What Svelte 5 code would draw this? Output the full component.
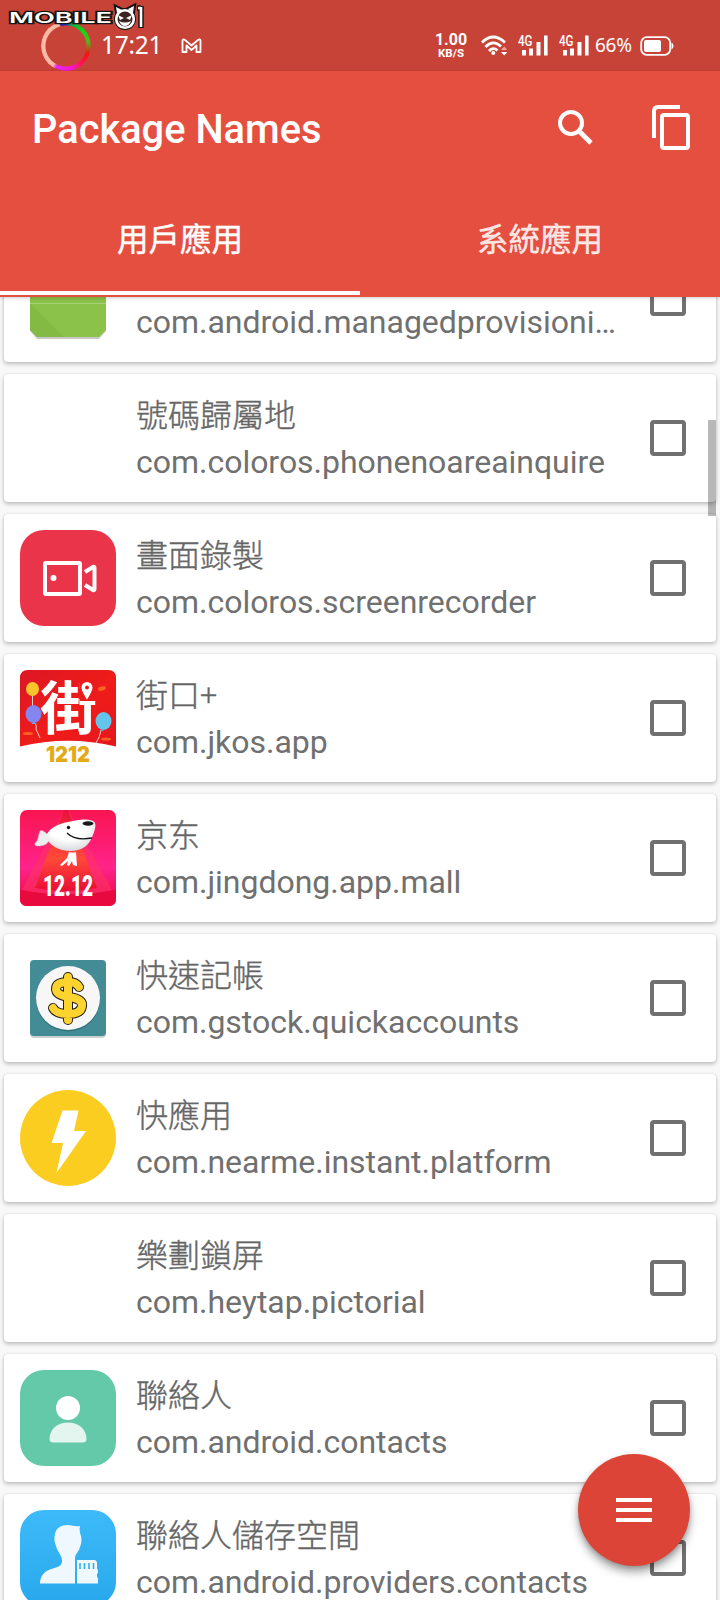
<script>
  let apps = $state([
    { name: '', pkg: 'com.android.managedprovisioning', icon: 'android', checked: false },
    { name: '號碼歸屬地', pkg: 'com.coloros.phonenoareainquire', icon: '', checked: false },
    { name: '畫面錄製', pkg: 'com.coloros.screenrecorder', icon: 'recorder', checked: false },
    { name: '街口+', pkg: 'com.jkos.app', icon: 'jkos', checked: false },
    { name: '京东', pkg: 'com.jingdong.app.mall', icon: 'jd', checked: false },
    { name: '快速記帳', pkg: 'com.gstock.quickaccounts', icon: 'money', checked: false },
    { name: '快應用', pkg: 'com.nearme.instant.platform', icon: 'bolt', checked: false },
    { name: '樂劃鎖屏', pkg: 'com.heytap.pictorial', icon: '', checked: false },
    { name: '聯絡人', pkg: 'com.android.contacts', icon: 'contacts', checked: false },
    { name: '聯絡人儲存空間', pkg: 'com.android.providers.contacts', icon: 'storage', checked: false }
  ]);

  const tabs = ['用戶應用', '系統應用'];
  let activeTab = $state(0);
</script>

{#snippet signal()}
  <svg class="signal" width="30" height="21" viewBox="0 0 30 21">
    <text x="0" y="11" textLength="14.500" lengthAdjust="spacingAndGlyphs">4G</text>
    <path d="M4 15h4v5.500h-4zM11 13.500h4v7h-4zM18.500 7h4v13.500h-4zM26 0.500h3.600v20h-3.600z" />
  </svg>
{/snippet}

{#snippet appIcon(icon)}
  <svg class="app-icon" width="96" height="96" viewBox="0 0 96 96">
    {#if icon === 'android'}
      <path d="M10 10h76v70l-7 8H17l-7-8z" fill="#c9c9c9" transform="translate(0 1)" />
      <path d="M10 10h76v70l-7 7H17l-7-7z" fill="#8bc34a" />
      <path d="M10 53l34 34H17l-7-7z" fill="#7fb642" opacity="0.7" />
      <path d="M10 53.500h76" stroke="#a5cf74" />
    {:else if icon === 'recorder'}
      <rect width="96" height="96" rx="24" fill="#ea3449" />
      <g fill="none" stroke="#fff" stroke-width="4" stroke-linejoin="round">
        <rect x="25" y="33" width="35" height="31" rx="1" />
        <path d="M65 42l8-5q1.500-.5 1.500 1v21q0 1.500-1.500 1l-8-5" />
      </g>
      <circle cx="33.500" cy="48" r="3" fill="#fff" />
    {:else if icon === 'jkos'}
      <defs>
        <linearGradient id="jkosBg" x2="1" y2="1">
          <stop offset="0" stop-color="#dd1724" />
          <stop offset="0.55" stop-color="#ef1c19" />
          <stop offset="1" stop-color="#e5161d" />
        </linearGradient>
      </defs>
      <path d="M8 0h80q8 0 8 8v68.500Q48 65 0 76.500V8q0-8 8-8z" fill="url(#jkosBg)" />
      <g fill="#ff7429" opacity="0.8">
        <ellipse cx="82" cy="18.500" rx="4" ry="2" transform="rotate(-15 82 18.500)" />
        <ellipse cx="8" cy="63.500" rx="5" ry="1.500" />
        <ellipse cx="86" cy="69" rx="5" ry="1.500" />
      </g>
      <text class="jkos-char" x="20" y="58.500">街</text>
      <path d="M60 9h17v22H60z" fill="#ec1b1b" />
      <path d="M67 12a5.500 5.500 0 0 1 5.500 5.500c0 4-5.500 12-5.500 12s-5.500-8-5.500-12A5.500 5.500 0 0 1 67 12z" fill="#fff" />
      <circle cx="67" cy="17.500" r="2" fill="#e91d1d" />
      <g fill="none" stroke="#ffd3c8" stroke-width="1">
        <path d="M12.500 25v11M15 53q2 3 1 6l4 9M81 60q-1 7-5 13" />
      </g>
      <ellipse cx="12.500" cy="19" rx="6.500" ry="7" fill="#f9c52b" />
      <ellipse cx="13.500" cy="44" rx="8" ry="9" fill="#8585ee" />
      <ellipse cx="83.500" cy="51" rx="8" ry="9" fill="#65c4e9" />
      <path d="M11 54l3-2 3 2zM80 61l2-2 2 2z" fill="#65a9e0" />
      <text class="jkos-date" x="26" y="91.500" textLength="44" lengthAdjust="spacingAndGlyphs">1212</text>
    {:else if icon === 'jd'}
      <defs>
        <linearGradient id="jdBg" x2="0" y2="1">
          <stop offset="0" stop-color="#f91551" />
          <stop offset="0.6" stop-color="#ff238b" />
          <stop offset="1" stop-color="#e8083e" />
        </linearGradient>
        <linearGradient id="jdBeam" x2="0" y2="1">
          <stop offset="0" stop-color="#e9123b" />
          <stop offset="0.6" stop-color="#ff4a38" />
          <stop offset="1" stop-color="#ea0b35" />
        </linearGradient>
        <radialGradient id="jdHead" cx="0.45" cy="0.3" r="0.7">
          <stop offset="0.5" stop-color="#fff" />
          <stop offset="1" stop-color="#d9dadd" />
        </radialGradient>
      </defs>
      <rect width="96" height="96" rx="7" fill="url(#jdBg)" />
      <path d="M44 0h4l44 80q-44 9-90 0z" fill="#ff3562" opacity="0.55" />
      <path d="M44 0h4l29 78q-31 6-62 0z" fill="url(#jdBeam)" />
      <path d="M0 80q48 9 96 0v9q0 7-7 7H7q-7 0-7-7z" fill="#e80a3f" />
      <path d="M27 24q-7-7-8 0-1 7-4 9.500-1 3 5 2.500 8-1 9-6z" fill="#eeeef0" stroke="#c6bbc1" stroke-width="0.500" />
      <path d="M26 26c3-8 13-13 27-15 8-1.500 14-2 19-.5 6 1.500 3 10-1 19-4 8-12 11.500-20 11.500-12 0-23-6-25-15z" fill="url(#jdHead)" />
      <ellipse cx="68" cy="13.500" rx="5.500" ry="2.200" fill="#18181a" />
      <circle cx="48.500" cy="17.500" r="1.700" fill="#18181a" />
      <path d="M47 23q8 8 25 5" fill="none" stroke="#18181a" stroke-width="1.300" />
      <path d="M49 42q4 1 7 0l1 14-4-1-1-4-3 5-2-1 1-4-6 5-2-1 7-7z" fill="#fff" />
      <text class="jd-date" x="23" y="85.500" textLength="50" lengthAdjust="spacingAndGlyphs">12.12</text>
    {:else if icon === 'money'}
      <rect x="10" y="12" width="76" height="76" rx="4" fill="#cbd0d0" />
      <rect x="10" y="10" width="76" height="76" rx="4" fill="#438b95" />
      <circle cx="48" cy="49.500" r="32" fill="#34737b" />
      <circle cx="48" cy="48" r="32" fill="#f7f7f7" />
      <g fill="none" stroke-linecap="round" stroke-linejoin="round">
        <path class="dollar-edge" d="M59 37q-3-5-10-5-13 0-13 7 0 6 13 8 14 2 13 9-1 8-14 8-12 0-15-6M48 27v43" />
        <path class="dollar" d="M59 37q-3-5-10-5-13 0-13 7 0 6 13 8 14 2 13 9-1 8-14 8-12 0-15-6M48 27v43" />
      </g>
    {:else if icon === 'bolt'}
      <circle cx="48" cy="48" r="48" fill="#fccd21" />
      <path d="M42.500 20.500h16L54 41h12L36.500 83l6.500-30H31.500z" fill="#fff" />
    {:else if icon === 'contacts'}
      <rect width="96" height="96" rx="24" fill="#63c9a8" />
      <circle cx="48" cy="38" r="12" fill="#fff" />
      <path d="M29.500 69c0-10 8-16.500 18.500-16.500S66.500 59 66.500 69q0 3.500-4 3.500h-29q-4 0-4-3.500z" fill="#e4f4ee" />
    {:else if icon === 'storage'}
      <defs>
        <linearGradient id="storageBg" x2="0" y2="1">
          <stop offset="0" stop-color="#3dbaf9" />
          <stop offset="1" stop-color="#28a8ec" />
        </linearGradient>
      </defs>
      <rect width="96" height="96" rx="24" fill="url(#storageBg)" />
      <path d="M48 15c4 0 7 2 12 1q-1 3 0 7c2 5 2 9 0 14-1 5-5 7-5 11v25.500H20c0-7 4-12 10-14 8-3 12-3 12-8.500 0-6-4-8-6-15-2-5-2-8-1-12 1-6 6-9 13-9z" fill="#eff8fe" />
      <path d="M57 50h18l2 2v7l1 1v3l-1 1v3l1 1v5.500H57z" fill="#eff8fe" />
      <path d="M60 53v6M64.500 53v6M69 53v6M73.500 53v6" stroke="#35aeee" stroke-width="1.600" />
    {/if}
  </svg>
{/snippet}

<div class="screen">
  <div class="status-bar">
    <div class="ring"></div>
    <span class="clock">17:21</span>
    <svg class="mail" width="21" height="16" viewBox="0 0 21 16">
      <path d="M1.500 14V3Q1.500 0.500 4 2l6.500 5.500L17 2q2.500-1.500 2.500 1v11h-4V7.500l-5 4.500-5-4.500V14z" />
    </svg>

    <div class="speed">
      <b>1.00</b>
      <small>KB/S</small>
    </div>
    <svg class="wifi" width="28" height="21" viewBox="0 0 28 21">
      <g fill="none" stroke="#fff" stroke-width="2.800">
        <path d="M1 7.500Q12 -3.500 24 7.500M4.500 12Q12 4 20 11.500M8 16Q12 11.500 16.500 15.500" />
      </g>
      <circle cx="12.300" cy="18" r="2" fill="#fff" />
      <path d="M20 15l3.200-3.500 3.200 3.500z" fill="#f1a59b" />
      <path d="M20 17h6.400l-3.200 3.500z" fill="#fff" />
    </svg>
    {@render signal()}
    {@render signal()}
    <span class="percent">66%</span>
    <svg class="battery" width="34" height="20" viewBox="0 0 34 20">
      <rect x="1.200" y="1.200" width="29" height="17.600" rx="5.500" fill="none" stroke="#fff" stroke-width="1.800" />
      <rect x="4" y="4" width="17" height="12" rx="2" fill="#fff" />
      <path d="M31.500 6.500q2 1 2 3.500t-2 3.500z" fill="#fff" />
    </svg>

    <svg class="watermark" width="140" height="30" viewBox="0 0 140 30">
      <text x="1" y="19" textLength="103" lengthAdjust="spacingAndGlyphs">MOBILE</text>
      <g stroke="#151515" stroke-width="4" fill="#151515">
        <circle cx="117" cy="15" r="9" />
        <path d="M109 9l-1-6 6 3zM120 5l6-3-1 7z" />
      </g>
      <circle cx="117" cy="15" r="8.800" fill="#3b2422" stroke="#fff" stroke-width="2.600" />
      <path d="M109 9l-1-6 6 3zM120 5l6-3-1 7z" fill="#fff" />
      <path d="M110 11l6 3-4 2zM124 11l-6 3 4 2zM111 17q6 3 12 0-2 5-6 5t-6-5z" fill="#fff" />
      <path class="mark-one" d="M133 2v22M129 4h4" />
      <path class="mark-one light" d="M133 3v20M130 4h3" />
    </svg>
  </div>

  <header>
    <div class="toolbar">
      <h1>Package Names</h1>
      <button class="search" aria-label="Search">
        <svg width="35" height="35" viewBox="0 0 35 35" fill="none" stroke="#fff">
          <circle cx="13" cy="13" r="11" stroke-width="4" />
          <path d="M21 21l12 12" stroke-width="4.800" />
        </svg>
      </button>
      <button class="copy" aria-label="Copy">
        <svg width="38" height="45" viewBox="0 0 38 45" fill="none" stroke="#fff" stroke-width="4">
          <path d="M2 33V6q0-4 4-4h22" />
          <rect x="10" y="10" width="26" height="33" rx="2" />
        </svg>
      </button>
    </div>
    <nav>
      {#each tabs as tab, index (tab)}
        <button class="tab" class:active={activeTab === index} onclick={() => (activeTab = index)}>
          {tab}
        </button>
      {/each}
    </nav>
  </header>

  <main>
    {#each apps as app (app.pkg)}
      <label class="card">
        {@render appIcon(app.icon)}
        <div class="info">
          <div class="name">{app.name}</div>
          <div class="pkg">{app.pkg}</div>
        </div>
        <input type="checkbox" bind:checked={app.checked} aria-label={app.pkg} />
      </label>
    {/each}
    <div class="scrollbar"></div>
  </main>

  <button class="fab" aria-label="Menu">
    <span></span>
    <span></span>
    <span></span>
  </button>
</div>

<style>
  :global(body) {
    margin: 0;
    background: #fafafa;
  }

  .screen {
    position: relative;
    width: 720px;
    height: 1600px;
    overflow: hidden;
    display: flex;
    flex-direction: column;
    background: #f8f8f8;
    font-family: Roboto, 'Noto Sans CJK TC', sans-serif;
  }

  button {
    padding: 0;
    border: 0;
    background: none;
    font-family: inherit;
  }

  svg {
    display: block;
    flex: none;
    overflow: visible;
  }

  /* Status bar */
  .status-bar {
    position: relative;
    display: flex;
    align-items: center;
    box-sizing: border-box;
    height: 71px;
    padding: 20px 46px 0 41px;
    background: #c84337;
    color: #fff;
  }

  .ring {
    width: 50px;
    height: 50px;
    border-radius: 50%;
    background: conic-gradient(#1238b5 0deg, #19a34a 15deg, #12d812 50deg, #55b51c 80deg, #f31313 110deg, #ff1456 140deg, #f714d8 165deg, #e728e8 205deg, #fbb9a6 214deg, #fbb9a6 342deg, #2525b5 346deg);
    mask: radial-gradient(circle, transparent 20px, #000 21px);
  }

  .clock {
    width: 60px;
    margin-left: 10px;
    padding-bottom: 2px;
    font: 24.5px/30px 'Noto Sans', sans-serif;
    letter-spacing: -0.3px;
  }

  .mail {
    margin-left: 20px;
    fill: none;
    stroke: #fff;
    stroke-width: 1.800;
    stroke-linejoin: round;
  }

  .speed {
    display: flex;
    flex-direction: column;
    align-items: center;
    width: 34px;
    margin-left: auto;
    padding-bottom: 1px;
  }

  .speed b {
    font-size: 16px;
    line-height: 15px;
  }

  .speed small {
    font-size: 11.5px;
    font-weight: 700;
    line-height: 12px;
  }

  .wifi {
    margin: 0 9px 0 13px;
  }

  .signal {
    margin-right: 11px;
    fill: #fff;
  }

  .signal text {
    font-size: 14.5px;
    font-weight: 500;
  }

  .percent {
    width: 40px;
    margin-left: -5px;
    padding-bottom: 1px;
    font: 19px/24px 'Noto Sans', sans-serif;
    letter-spacing: -0.3px;
  }

  .battery {
    margin-left: 5px;
  }

  .watermark {
    position: absolute;
    left: 8px;
    top: 4px;
  }

  .watermark text {
    font: 600 15px Inter, sans-serif;
    fill: #fff;
    stroke: #151515;
    stroke-width: 2.500;
    paint-order: stroke;
  }

  .mark-one {
    fill: none;
    stroke: #151515;
    stroke-width: 5.500;
  }

  .mark-one.light {
    stroke: #fff;
    stroke-width: 2.600;
  }

  /* Header */
  header {
    position: relative;
    z-index: 1;
    height: 226px;
    background: #e54f40;
    box-shadow: 0 1px 4px rgba(0, 0, 0, 0.2);
  }

  .toolbar {
    display: flex;
    align-items: center;
    box-sizing: border-box;
    height: 114px;
    padding: 0 30px 2px 32px;
  }

  h1 {
    flex: 1;
    margin: 0;
    padding-top: 4px;
    color: #fff;
    font-size: 39.8px;
    font-weight: 500;
  }

  .copy {
    margin-left: 59px;
  }

  nav {
    display: flex;
    height: 112px;
  }

  .tab {
    flex: 1;
    box-sizing: border-box;
    height: 110px;
    padding-bottom: 3px;
    border-bottom: 4px solid transparent;
    color: rgba(255, 255, 255, 0.85);
    font-family: 'Noto Sans CJK TC', sans-serif;
    font-size: 31.5px;
    font-weight: 400;
    -webkit-text-stroke: 0.4px;
  }

  .tab.active {
    border-color: #fff;
    color: #fff;
  }

  /* List */
  main {
    position: relative;
    flex: 1;
    min-height: 0;
    display: flex;
    flex-direction: column;
    gap: 12px;
    padding: 0 4px;
  }

  .card {
    display: flex;
    align-items: center;
    box-sizing: border-box;
    flex: none;
    height: 128px;
    padding: 0 30px 0 16px;
    border-radius: 4px;
    background: #fff;
    box-shadow: 0 2px 4px rgba(0, 0, 0, 0.24), 0 0 2px rgba(0, 0, 0, 0.1);
  }

  .card:first-child {
    margin-top: -63px;
  }

  .info {
    width: 490px;
    margin-left: 20px;
    padding-bottom: 1px;
  }

  .name,
  .pkg {
    height: 46px;
    line-height: 46px;
    white-space: nowrap;
    overflow: hidden;
    text-overflow: ellipsis;
  }

  .name {
    margin-bottom: 3px;
    color: #666;
    font-family: 'Noto Sans CJK TC', sans-serif;
    font-size: 32px;
    font-weight: 300;
    -webkit-text-stroke: 0.4px;
  }

  .pkg {
    color: #707070;
    font-size: 32px;
    letter-spacing: -0.02px;
  }

  input {
    appearance: none;
    box-sizing: border-box;
    width: 36px;
    height: 36px;
    margin: 0 0 0 auto;
    border: 4px solid #707070;
    border-radius: 4px;
  }

  input:checked {
    background: #db4437;
  }

  .scrollbar {
    position: absolute;
    top: 123px;
    right: 4px;
    width: 8px;
    height: 96px;
    background: rgba(0, 0, 0, 0.28);
  }

  /* Icon lettering */
  .jkos-char {
    fill: #fff;
    font: 700 57px 'Noto Sans CJK TC', sans-serif;
  }

  .jkos-date {
    fill: #e2aa17;
    font: 900 22px Inter, sans-serif;
  }

  .jd-date {
    fill: #fff;
    font: 900 29px Roboto, sans-serif;
  }

  .dollar-edge {
    stroke: #231f16;
    stroke-width: 10;
  }

  .dollar {
    stroke: #fdd42f;
    stroke-width: 8;
  }

  .fab {
    position: absolute;
    right: 30px;
    bottom: 34px;
    z-index: 2;
    display: flex;
    flex-direction: column;
    align-items: center;
    justify-content: center;
    gap: 6px;
    width: 112px;
    height: 112px;
    border-radius: 50%;
    background: #db4437;
    box-shadow: 0 6px 10px rgba(0, 0, 0, 0.35), 0 2px 4px rgba(0, 0, 0, 0.15);
  }

  .fab span {
    width: 36px;
    height: 4px;
    background: #fff;
  }
</style>
